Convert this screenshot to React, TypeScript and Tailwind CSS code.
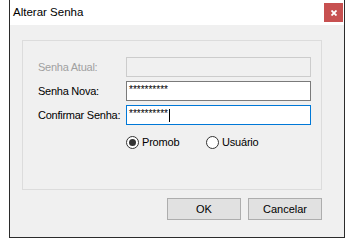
const font = { fontFamily: '"Liberation Sans", Arial, sans-serif' };

const Field = ({ label, state }: { label: string; state: "disabled" | "normal" | "focus" }) => {
  const box =
    state === "disabled"
      ? "border-[#cccccc] bg-[#f0f0f0]"
      : state === "focus"
      ? "border-[#0078d7] bg-white"
      : "border-[#7a7a7a] bg-white";
  return (
    <div className="flex h-[20px] items-center">
      <span
        className={`w-[88px] text-[11px] leading-none tracking-[-0.25px] ${
          state === "disabled" ? "text-[#a0a0a0]" : "text-black"
        }`}
      >
        {label}
      </span>
      <div className={`flex h-[20px] w-[185px] items-start border pl-[2px] pt-[1px] ${box}`}>
        {state !== "disabled" && (
          <span className="text-[10px] leading-[13px] text-black">**********</span>
        )}
        {state === "focus" && <span className="ml-[1px] mt-[2px] h-[13px] w-px bg-black" />}
      </div>
    </div>
  );
};

const Radio = ({ label, checked }: { label: string; checked?: boolean }) => (
  <div className="flex w-[80px] items-center gap-[3px]">
    <span className="flex h-[13px] w-[13px] items-center justify-center rounded-full border border-[#333333] bg-white">
      {checked && <span className="h-[7px] w-[7px] rounded-full bg-[#333333]" />}
    </span>
    <span className="text-[11px] leading-none tracking-[-0.2px] text-black">{label}</span>
  </div>
);

export default function App() {
  return (
    <div className="h-[245px] w-[351px] bg-white" style={font}>
      <div className="ml-[9px] flex h-[238px] w-[336px] flex-col border-x border-b border-[#2b2b2b] bg-[#f0f0f0]">
        {/* title bar */}
        <div className="flex h-[25px] items-start justify-between bg-white">
          <span className="mt-[6px] pl-[3px] text-[11.5px] leading-[13px] text-black">Alterar Senha</span>
          <button className="mr-[1px] mt-[3px] flex h-[19px] w-[19px] items-center justify-center bg-[#c75050]">
            <svg width="6" height="6" viewBox="0 0 6 6">
              <path d="M0.5 0.5L5.5 5.5M5.5 0.5L0.5 5.5" stroke="white" strokeWidth="1.8" />
            </svg>
          </button>
        </div>

        {/* group box */}
        <div className="ml-[12px] mt-[15px] flex h-[150px] w-[300px] flex-col border border-[#dcdcdc] pl-[15px] pt-[16px]">
          <div className="flex flex-col gap-[4px]">
            <Field label="Senha Atual:" state="disabled" />
            <Field label="Senha Nova:" state="normal" />
            <Field label="Confirmar Senha:" state="focus" />
          </div>
          <div className="ml-[88px] mt-[11px] flex">
            <Radio label="Promob" checked />
            <Radio label="Usuário" />
          </div>
        </div>

        {/* buttons */}
        <div className="mr-[22px] mt-[8px] flex justify-end gap-[7px]">
          <button className="h-[22px] w-[74px] border border-[#adadad] bg-[#e1e1e1] text-[11px] text-black">OK</button>
          <button className="h-[22px] w-[74px] border border-[#adadad] bg-[#e1e1e1] text-[11px] text-black">Cancelar</button>
        </div>
      </div>
    </div>
  );
}
